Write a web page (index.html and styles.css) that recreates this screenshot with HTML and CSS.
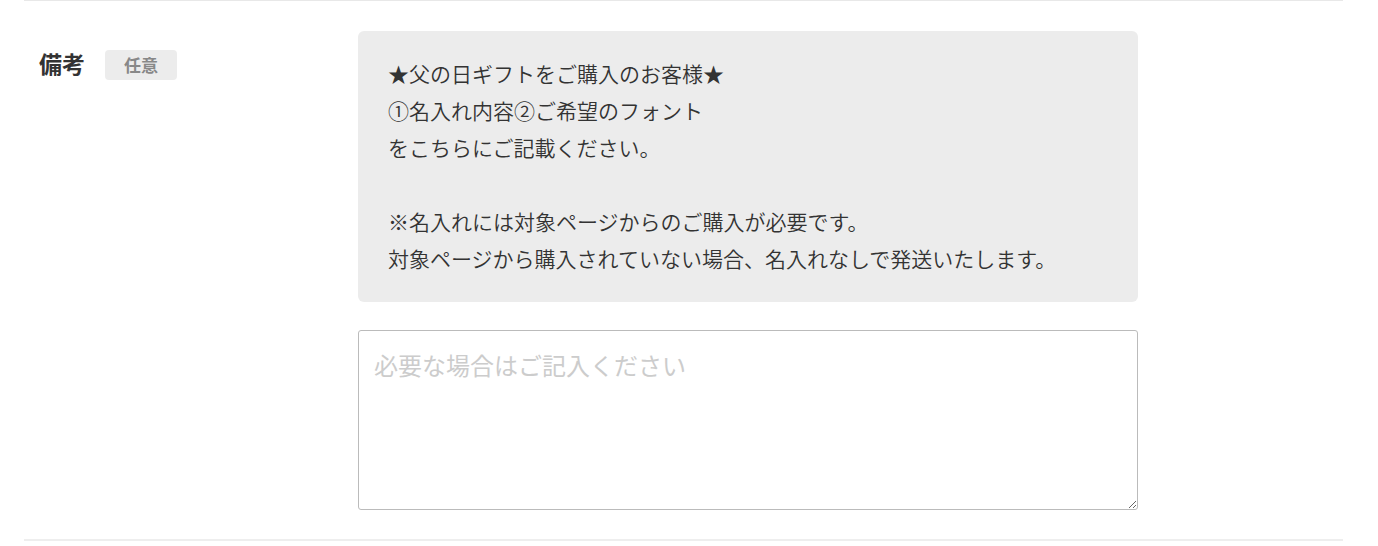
FILE: index.html
```html
<!DOCTYPE html>
<html lang="ja">
<head>
    <meta charset="UTF-8">
    <title>備考</title>
    <link rel="stylesheet" href="styles.css">
</head>
<body>
    <div class="form-row">
        <div class="form-label">
            <span class="label-text">備考</span>
            <span class="badge">任意</span>
        </div>
        <div class="form-body">
            <div class="note">
                ★父の日ギフトをご購入のお客様★<br>
                ①名入れ内容②ご希望のフォント<br>
                をこちらにご記載ください。<br>
                <br>
                ※名入れには対象ページからのご購入が必要です。<br>
                対象ページから購入されていない場合、名入れなしで発送いたします。
            </div>
            <textarea class="remarks" name="remarks" placeholder="必要な場合はご記入ください"></textarea>
        </div>
    </div>
</body>
</html>
```

FILE: styles.css
```css
body {
    background: #fff;
    font-family: "Noto Sans CJK JP", "Noto Sans", sans-serif;
    color: #333;
    margin: 0;
    padding: 0;
}
.form-row {
    display: flex;
    margin: 0 35px 0 24px;
    padding: 30px 0 29px 15px;
    border-top: 1px solid #e8e8e8;
    border-bottom: 2px solid #eee;
}
.form-label {
    width: 319px;
    display: flex;
    align-items: flex-start;
    gap: 20px;
    padding-top: 18px;
}
.label-text {
    font-size: 23px;
    font-weight: bold;
    line-height: 28px;
}
.badge {
    display: inline-block;
    width: 72px;
    height: 30px;
    line-height: 30px;
    text-align: center;
    background: #ececec;
    color: #888;
    font-size: 17px;
    font-weight: bold;
    border-radius: 4px;
    margin-top: 1px;
}
.form-body {
    width: 780px;
}
.note {
    background: #ececec;
    border-radius: 6px;
    padding: 24px 30px 25px;
    font-size: 21px;
    line-height: 37px;
    font-weight: 350;
    color: #333;
}
.remarks {
    display: block;
    width: 780px;
    height: 180px;
    margin-top: 28px;
    box-sizing: border-box;
    border: 1px solid #bbb;
    border-radius: 3px;
    padding: 16px 15px;
    font-family: "Noto Sans CJK JP", "Noto Sans", sans-serif;
    font-size: 24px;
    color: #333;
    resize: vertical;
}
.remarks::placeholder {
    color: #ccc;
}
```
